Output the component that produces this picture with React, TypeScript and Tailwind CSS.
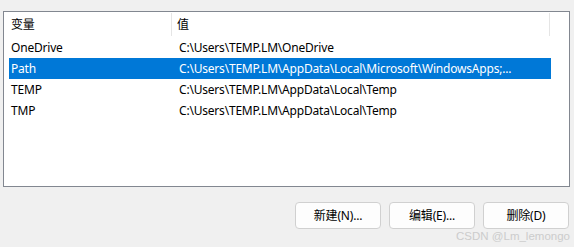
import React from "react";

const rows = [
  { name: "OneDrive", value: "C:\\Users\\TEMP.LM\\OneDrive", sel: false },
  { name: "Path", value: "C:\\Users\\TEMP.LM\\AppData\\Local\\Microsoft\\WindowsApps;...", sel: true },
  { name: "TEMP", value: "C:\\Users\\TEMP.LM\\AppData\\Local\\Temp", sel: false },
  { name: "TMP", value: "C:\\Users\\TEMP.LM\\AppData\\Local\\Temp", sel: false },
];

const font = { fontFamily: '"Noto Sans", "Noto Sans CJK SC", sans-serif' };

export default function App() {
  return (
    <div
      className="w-[574px] h-[247px] bg-[#f0f0f0] pt-[11px] pl-[3px] relative overflow-hidden text-[12px] text-black tracking-[-0.2px]"
      style={font}
    >
      <div className="w-[567px] h-[176px] border border-[#828790] bg-white">
        <div className="flex h-[25px] items-center">
          <div className="w-[168px] h-[23px] border-r border-[#e5e5e5] pl-[7px] flex items-center">变量</div>
          <div className="w-[378px] h-[23px] border-r border-[#e5e5e5] pl-[5px] flex items-center">值</div>
        </div>
        <div className="flex flex-col pl-[5px]">
          {rows.map((r) => (
            <div
              key={r.name}
              className={
                r.sel
                  ? "flex h-[21px] w-[542px] items-center bg-[#0078d7] text-white"
                  : "flex h-[21px] w-[542px] items-center"
              }
            >
              <div className="w-[170px] pl-[2px] whitespace-nowrap">{r.name}</div>
              <div className="whitespace-nowrap">{r.value}</div>
            </div>
          ))}
        </div>
      </div>
      <div className="flex justify-end gap-[8px] mt-[15px] pr-[5px]">
        {["新建(N)...", "编辑(E)...", "删除(D)"].map((t) => (
          <div
            key={t}
            className="w-[86px] h-[27px] border border-[#d0d0d0] rounded-[4px] bg-[#fdfdfd] flex items-center justify-center"
          >
            {t}
          </div>
        ))}
      </div>
      <div
        className="absolute right-[4px] bottom-[2px] text-[11.5px] tracking-normal text-[#cccccc]"
        style={{ fontFamily: '"Liberation Sans", sans-serif' }}
      >
        CSDN @Lm_lemongo
      </div>
    </div>
  );
}
